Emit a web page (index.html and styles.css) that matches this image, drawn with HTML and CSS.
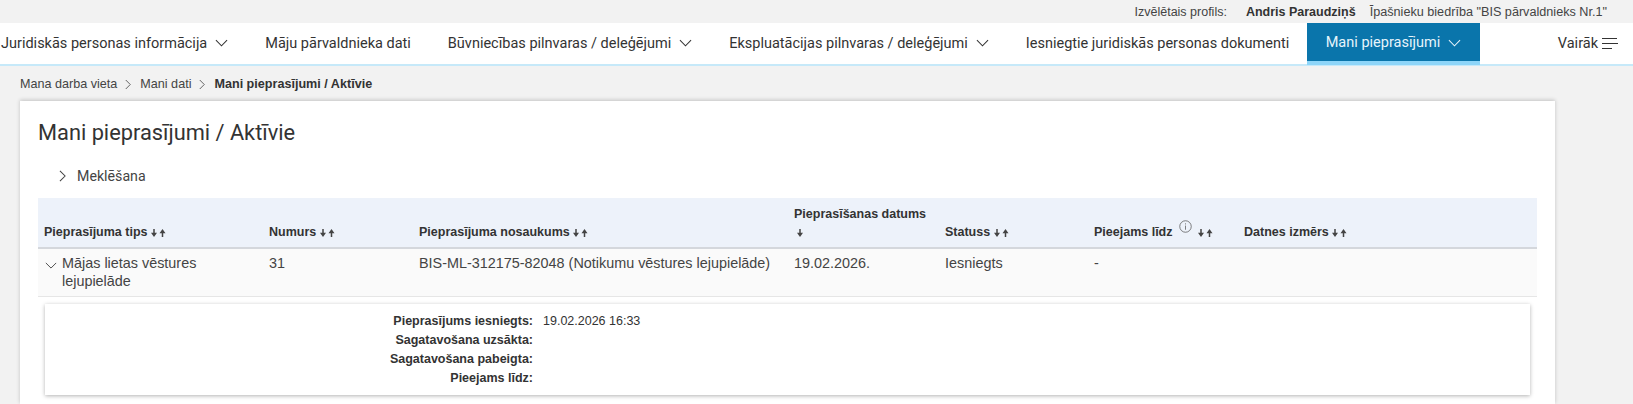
FILE: index.html
```html
<!DOCTYPE html>
<html lang="lv">
<head>
<meta charset="utf-8">
<title>Mani pieprasījumi / Aktīvie</title>
<link rel="stylesheet" href="styles.css">
</head>
<body>
<svg class="defs" width="0" height="0" aria-hidden="true">
  <symbol id="down" viewBox="0 0 14 8"><path d="M1 1l6 6 6-6" fill="none" stroke="currentColor" stroke-width="1.1"/></symbol>
  <symbol id="right" viewBox="0 0 8 14"><path d="M1 1l6 6-6 6" fill="none" stroke="currentColor" stroke-width="1.2"/></symbol>
  <symbol id="sort" viewBox="0 0 15 8"><path d="M3 0v5M11.5 8V3" fill="none" stroke="currentColor" stroke-width="1.5"/><path d="M0 3.8h6L3 8zM8.5 4.2h6L11.5 0z" fill="currentColor"/></symbol>
  <symbol id="sort-d" viewBox="0 0 6 8"><path d="M3 0v5" fill="none" stroke="currentColor" stroke-width="1.5"/><path d="M0 3.8h6L3 8z" fill="currentColor"/></symbol>
</svg>
<div class="profile">
  <span class="profile-label">Izvēlētais profils:</span>
  <strong class="profile-name">Andris Paraudziņš</strong>
  <span class="profile-org">Īpašnieku biedrība "BIS pārvaldnieks Nr.1"</span>
</div>
<nav class="nav">
  <a class="nav-item nav-first">Juridiskās personas informācija <svg class="chev"><use href="#down"/></svg></a>
  <a class="nav-item">Māju pārvaldnieka dati</a>
  <a class="nav-item">Būvniecības pilnvaras / deleģējumi <svg class="chev"><use href="#down"/></svg></a>
  <a class="nav-item">Ekspluatācijas pilnvaras / deleģējumi <svg class="chev"><use href="#down"/></svg></a>
  <a class="nav-item">Iesniegtie juridiskās personas dokumenti</a>
  <a class="nav-item nav-active">Mani pieprasījumi <svg class="chev"><use href="#down"/></svg></a>
  <a class="nav-more">Vairāk
    <svg class="burger" viewBox="0 0 16 11"><path d="M0 .5h15M0 5.5h16M0 10.5h10" fill="none" stroke="currentColor" stroke-width="1"/></svg>
  </a>
</nav>
<div class="crumbs">
  <span>Mana darba vieta</span><svg class="crumb-sep"><use href="#right"/></svg>
  <span>Mani dati</span><svg class="crumb-sep"><use href="#right"/></svg>
  <strong>Mani pieprasījumi / Aktīvie</strong>
</div>
<main class="card">
  <h1 class="title">Mani pieprasījumi / Aktīvie</h1>
  <div class="search"><svg class="search-chev"><use href="#right"/></svg>Meklēšana</div>
  <table class="table">
    <colgroup>
      <col class="c1"><col class="c2"><col class="c3"><col class="c4"><col class="c5"><col class="c6"><col class="c7">
    </colgroup>
    <thead>
      <tr>
        <th>Pieprasījuma tips <svg class="sort"><use href="#sort"/></svg></th>
        <th>Numurs <svg class="sort"><use href="#sort"/></svg></th>
        <th>Pieprasījuma nosaukums <svg class="sort"><use href="#sort"/></svg></th>
        <th>Pieprasīšanas datums <svg class="sort-down"><use href="#sort-d"/></svg></th>
        <th>Statuss <svg class="sort"><use href="#sort"/></svg></th>
        <th>Pieejams līdz <svg class="info" viewBox="0 0 14 14"><circle cx="7" cy="7" r="6.2" fill="none" stroke="currentColor" stroke-width=".8"/><path d="M7 6v4.5M7 3.6v1.2" stroke="currentColor" stroke-width=".8"/></svg> <svg class="sort"><use href="#sort"/></svg></th>
        <th>Datnes izmērs <svg class="sort"><use href="#sort"/></svg></th>
      </tr>
    </thead>
    <tbody>
      <tr class="row">
        <td><div class="type"><svg class="row-chev"><use href="#down"/></svg><span>Mājas lietas vēstures lejupielāde</span></div></td>
        <td>31</td>
        <td>BIS-ML-312175-82048 (Notikumu vēstures lejupielāde)</td>
        <td>19.02.2026.</td>
        <td>Iesniegts</td>
        <td>-</td>
        <td></td>
      </tr>
    </tbody>
  </table>
  <section class="detail">
    <div class="d-key">Pieprasījums iesniegts:</div><div class="d-val">19.02.2026 16:33</div>
    <div class="d-key">Sagatavošana uzsākta:</div><div class="d-val"></div>
    <div class="d-key">Sagatavošana pabeigta:</div><div class="d-val"></div>
    <div class="d-key">Pieejams līdz:</div><div class="d-val"></div>
  </section>
</main>
</body>
</html>
```
FILE: styles.css
```css
* { box-sizing: border-box; }
html, body { height: 100%; }
body {
  margin: 0;
  background: #f2f2f2;
  color: #333;
  font-family: "Liberation Sans", Arial, sans-serif;
  overflow: hidden;
}
.defs { position: absolute; }
.profile {
  height: 23px;
  display: flex;
  justify-content: flex-end;
  align-items: center;
  padding-right: 26px;
  font-size: 12.5px;
  color: #444;
}
.profile-name { margin-left: 19px; margin-right: 14px; color: #333; }
.profile-org { font-size: 12.65px; }
.nav {
  height: 43px;
  background: #fff;
  border-bottom: 2px solid #c6e9f9;
  display: flex;
  font-family: Roboto, sans-serif;
  font-size: 14.5px;
  color: #333;
}
.nav-item {
  height: 41px;
  padding: 0 18.5px 1px;
  display: flex;
  align-items: center;
  gap: 8px;
  white-space: nowrap;
}
.nav-first { margin-left: -17.5px; }
.nav-active {
  background: #0a75ab;
  color: #e6f4fb;
  border-bottom: 4px solid #8ed5f8;
  height: 42px;
  margin-left: -1px;
  padding: 1px 19px 0;
}
.chev { width: 13px; height: 8px; }
.nav-more {
  margin-left: auto;
  margin-right: 15px;
  display: flex;
  align-items: center;
  gap: 4px;
  height: 40px;
}
.burger { width: 16px; height: 11px; }
.crumbs {
  height: 35px;
  padding: 1px 0 0 20px;
  display: flex;
  align-items: center;
  font-size: 12.6px;
}
.crumbs span { color: #444; }
.crumb-sep { width: 6px; height: 11px; margin: 0 9px 0 8px; color: #555; }
.card {
  margin: 0 78px 0 20px;
  height: 303px;
  background: #fff;
  box-shadow: 0 -1px 4px rgba(0,0,0,.2);
  padding: 0 18px;
}
.title {
  margin: 0;
  padding-top: 19px;
  height: 60px;
  font: 400 21.8px/26px Roboto, sans-serif;
  color: #333;
}
.search {
  height: 37px;
  display: flex;
  align-items: center;
  padding: 0 0 7px 21px;
  font: 14.2px Roboto, sans-serif;
  color: #444;
}
.search-chev { width: 7px; height: 12px; margin-right: 11px; }
.table {
  width: 1499px;
  table-layout: fixed;
  border-collapse: collapse;
  font-size: 14.4px;
}
.c1 { width: 225px; }
.c2 { width: 150px; }
.c3 { width: 375px; }
.c4 { width: 151px; }
.c5 { width: 149px; }
.c6 { width: 150px; }
.c7 { width: 299px; }
thead tr { height: 50px; background: #edf2fa; border-bottom: 2px solid #d4d7dc; }
th {
  padding: 0 6px 5px;
  font-size: 12.5px;
  line-height: 20px;
  text-align: left;
  color: #333;
  vertical-align: bottom;
}
.sort { width: 15px; height: 8px; vertical-align: -1px; color: #444; }
.sort-down { display: block; width: 6px; height: 8px; margin: 5px 0 5px 3px; color: #444; }
.info { width: 13px; height: 13px; vertical-align: 3px; margin: 0 3px 0 3px; color: #555; }
.row { height: 48px; background: #fafafa; border-bottom: 1px solid #e6e6e6; }
td {
  padding: 5px 6px 0;
  vertical-align: top;
  line-height: 18px;
  color: #444;
}
.type { display: flex; gap: 5px; margin-left: 1px; }
.row-chev { flex: none; width: 12px; height: 7px; margin-top: 8px; }
.type span { width: 170px; }
.detail {
  margin: 7px 7px 0;
  height: 91px;
  background: #fff;
  box-shadow: 0 1px 4px rgba(0,0,0,.3);
  padding: 8px 0;
  display: grid;
  grid-template-columns: 488px 1fr;
  grid-auto-rows: 19px;
  column-gap: 10px;
  font-size: 12.5px;
  line-height: 19px;
}
.d-key { text-align: right; font-weight: 700; }
```
